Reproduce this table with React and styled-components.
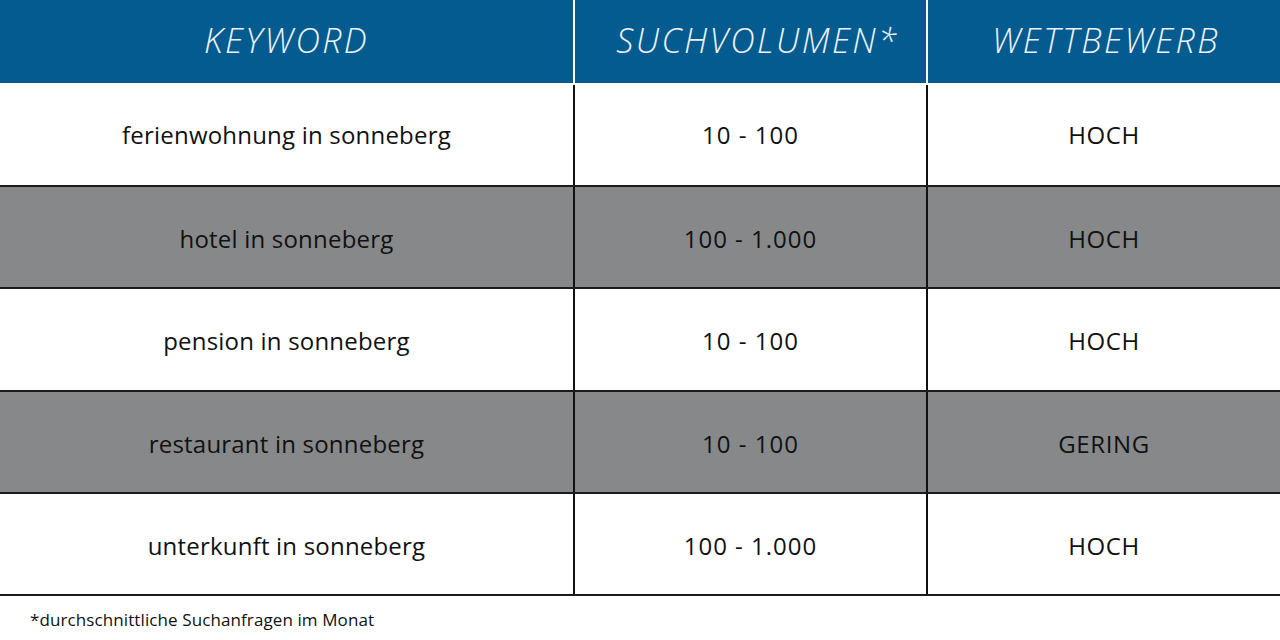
import React from 'react';
import styled, { createGlobalStyle } from 'styled-components';

const GlobalStyle = createGlobalStyle`
  html, body {
    margin: 0;
    padding: 0;
    background: #ffffff;
  }
  body {
    font-family: "Open Sans", "Liberation Sans", sans-serif;
  }
`;

const rows = [
    { keyword: 'ferienwohnung in sonneberg', volume: '10 - 100', level: 'HOCH' },
    { keyword: 'hotel in sonneberg', volume: '100 - 1.000', level: 'HOCH' },
    { keyword: 'pension in sonneberg', volume: '10 - 100', level: 'HOCH' },
    { keyword: 'restaurant in sonneberg', volume: '10 - 100', level: 'GERING' },
    { keyword: 'unterkunft in sonneberg', volume: '100 - 1.000', level: 'HOCH' },
];

const App = () => {
  return (
    <Page>
        <GlobalStyle />
        <Table>
            <HeadRow>
                <HeadCell>KEYWORD</HeadCell>
                <HeadCell $shift="14px">SUCHVOLUMEN*</HeadCell>
                <HeadCell $shift="4px">WETTBEWERB</HeadCell>
            </HeadRow>
            {rows.map((row, i) => (
                <Row key={row.keyword} $shaded={i % 2 === 1}>
                    <Cell>{row.keyword}</Cell>
                    <Cell $spacing="1px">{row.volume}</Cell>
                    <Cell $spacing="0.6px">{row.level}</Cell>
                </Row>
            ))}
        </Table>
        <Footnote>*durchschnittliche Suchanfragen im Monat</Footnote>
    </Page>
  );
};

const Page = styled.main`
    width: 1280px;
    height: 640px;
    display: flex;
    flex-direction: column;
    background: #ffffff;
    overflow: hidden;
`;

const Table = styled.section`
    display: flex;
    flex-direction: column;
`;

const HeadRow = styled.div`
    display: grid;
    grid-template-columns: 573px 353px 354px;
    height: 83px;
    border-bottom: 2px solid #ffffff;
    background: #035b90;
`;

const HeadCell = styled.div`
    display: flex;
    align-items: center;
    justify-content: center;
    color: #eef2f6;
    font-style: italic;
    font-weight: 350;
    font-size: 34px;
    letter-spacing: 2.4px;
    padding-bottom: 3px;
    padding-left: ${({ $shift }) => $shift || '0'};

    & + & {
        border-left: 2px solid #ffffff;
    }
`;

const Cell = styled.div`
    display: flex;
    align-items: center;
    justify-content: center;
    box-sizing: border-box;
    padding-top: 3px;
    color: #111111;
    font-size: 24px;
    letter-spacing: ${({ $spacing }) => $spacing || '0.2px'};

    & + & {
        border-left: 2px solid #111111;
    }
`;

const Row = styled.div`
    display: grid;
    grid-template-columns: 573px 353px 354px;
    height: 102.2px;
    box-sizing: border-box;
    border-bottom: 2px solid #1c1c1c;
    background: ${({ $shaded }) => ($shaded ? '#87888a' : '#ffffff')};

    ${HeadRow} + & > ${Cell} {
        padding-top: 0;
        padding-bottom: 2px;
    }
`;

const Footnote = styled.p`
    margin: 12px 0 0 30px;
    font-size: 17px;
    letter-spacing: 0.1px;
    color: #111111;
`;

export default App;
